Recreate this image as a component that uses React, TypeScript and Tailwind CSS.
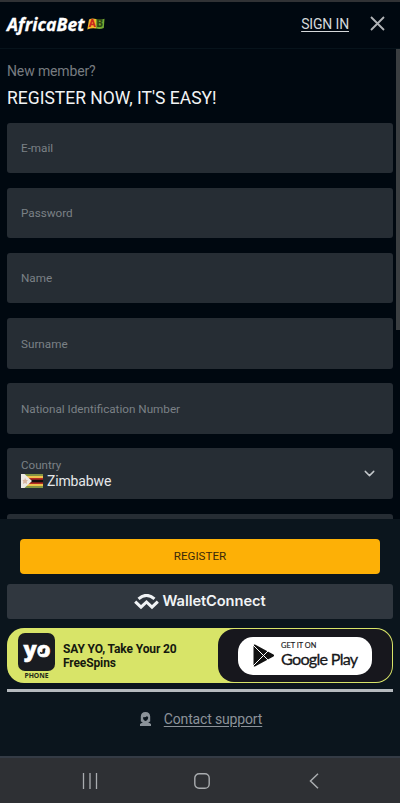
import { FiChevronDown } from 'react-icons/fi';

const fields = ['E-mail', 'Password', 'Name', 'Surname', 'National Identification Number'];

function Header() {
  return (
    <header className="h-[47px] shrink-0 flex items-center justify-between pl-[7px] pr-[15px] pb-[3px] border-b border-[#07131b]">
      <div className="flex items-center gap-[3px]">
        <span className="w-[77px] whitespace-nowrap font-['Open_Sans','Noto_Sans',sans-serif] font-bold italic text-[17.6px] leading-[22px] tracking-[0.05px] text-white [-webkit-text-stroke:0.3px_white]">
          AfricaBet
        </span>
        <svg width="18" height="16" viewBox="0 -2 18 16">
          <path d="M2 1.500Q5-.2 9 1V10.500Q5 9.500 .3 11.500Z" fill="#f3b92b" />
          <path d="M9 1Q13 2.500 17.500 .8L16.800 10Q13 11.500 9 10.500Z" fill="#75a832" />
          <text x="1.8" y="9.200" textLength="7.200" lengthAdjust="spacingAndGlyphs" fontFamily="Roboto, sans-serif" fontWeight="900" fontSize="10" fill="#c9271d">A</text>
          <text x="9.400" y="9.200" textLength="6.500" lengthAdjust="spacingAndGlyphs" fontFamily="Roboto, sans-serif" fontWeight="900" fontSize="10" fill="#304815">B</text>
        </svg>
      </div>
      <div className="flex items-center gap-[21px]">
        <a className="mt-px text-[14px] leading-5 tracking-[-0.15px] text-[#d5d8da] underline underline-offset-2">SIGN IN</a>
        <svg width="15" height="15" viewBox="0 0 15 15" fill="none" stroke="#b1b4b7" strokeWidth="1.8">
          <path d="M1 1l13 13M14 1L1 14" />
        </svg>
      </div>
    </header>
  );
}

function Flag() {
  return (
    <svg width="22" height="14" viewBox="0 0 22 14">
      <path d="M0 0h22v14H0z" fill="#829443" />
      <path d="M0 2h22v10H0z" fill="#efc14c" />
      <path d="M0 4h22v6H0z" fill="#b52b24" />
      <path d="M0 5.7h22v2.7H0z" fill="#160c0d" />
      <path d="M0 0h3.5L11 7l-7.5 7H0z" fill="#eeeae5" />
      <path d="M4 3.7l1 2 2 .5-1.3 1.4.3 2.3-2-1-2 1 .3-2.3L1.5 6l2-.3z" fill="#d9b5a0" />
    </svg>
  );
}

function RegisterForm() {
  return (
    <main className="relative h-[470px] shrink-0 overflow-hidden px-[7px] pt-[13px]">
      <p className="text-[14px] leading-[18px] tracking-[-0.13px] text-[#777c80]">New member?</p>
      <h1 className="mt-[6px] text-[17.5px] leading-6 text-[#f2f4f5]">REGISTER NOW, IT'S EASY!</h1>
      <div className="mt-[12.5px] flex flex-col gap-[14.7px]">
        {fields.map((label) => (
          <div key={label} className="h-[50.5px] flex items-center rounded-[3px] bg-[#262d34] px-[14px] pt-[2px] text-[11.7px] text-[#7b8186]">
            {label}
          </div>
        ))}
        <div className="h-[50.5px] flex items-center justify-between rounded-[3px] bg-[#262d34] pl-[14px] pr-[15px]">
          <div className="-mt-px">
            <div className="text-[11.6px] leading-[16px] text-[#7b8186]">Country</div>
            <div className="flex items-center gap-[4px] text-[14px] leading-[17px] tracking-[-0.15px] text-[#e5e7e9]">
              <Flag />
              Zimbabwe
            </div>
          </div>
          <FiChevronDown className="w-[17px] h-[17px] text-[#c3c7ca]" />
        </div>
        <div className="h-[50.5px] rounded-[3px] bg-[#262d34]" />
      </div>
      {/* Scrollbar thumb */}
      <div className="absolute right-0 top-0 w-[4px] h-[281px] bg-[#3a3e41]" />
    </main>
  );
}

function YoBanner() {
  return (
    <div className="mt-[9px] h-[55px] flex rounded-[17px] bg-[#d8e468] overflow-hidden">
      <div className="w-[61px] shrink-0 pl-[11px] pt-[5px] flex flex-col items-start">
        <div className="w-[37px] h-[38px] rounded-[7px] bg-[#191c21] flex items-center justify-center">
          <svg width="30" height="34" viewBox="0 0 30 34">
            <text x="1.5" y="22" fontFamily="Open Sans, sans-serif" fontWeight="800" fontSize="21" fill="#fff" stroke="#fff" strokeWidth=".6" textLength="27" lengthAdjust="spacingAndGlyphs">yo</text>
            <path d="M18 17.500q2.500 1.500 3.500-.5l1.500-3.500" stroke="#191c21" strokeWidth="1.5" fill="none" />
          </svg>
        </div>
        <span className="w-[37px] text-center font-['Open_Sans',sans-serif] font-bold text-[6.8px] leading-[10px] text-[#252a1a]">PHONE</span>
      </div>
      <p className="-ml-[5px] pt-[14px] whitespace-nowrap text-[12px] leading-[14px] tracking-[-0.12px] font-bold text-[#15190f]">
        SAY YO, Take Your 20
        <br />
        FreeSpins
      </p>
      <div className="my-px mr-px ml-auto w-[174px] rounded-[16px] bg-[#17171d] flex items-center pl-[20px]">
        <div className="w-[134px] h-[38px] rounded-[15px] bg-white flex items-center pl-[15px] gap-[7px]">
          <svg width="21" height="23" viewBox="0 0 21 23">
            <path d="M1.5 1.5L20 11.5l-18.5 10z" fill="#111" stroke="#111" strokeWidth="2" strokeLinejoin="round" />
            <path d="M0 1l15 15M0 22L15 7" stroke="#fff" strokeWidth="1" />
          </svg>
          <div className="whitespace-nowrap font-[Lato,sans-serif] text-[#17171a] -mt-[3px]">
            <div className="text-[7.4px] leading-[8px] [-webkit-text-stroke:0.15px_#17171a]">GET IT ON</div>
            <div className="text-[16.2px] leading-[17px] tracking-[-0.75px] [-webkit-text-stroke:0.3px_#17171a]">Google Play</div>
          </div>
        </div>
      </div>
    </div>
  );
}

function Footer() {
  return (
    <footer className="h-[237px] shrink-0 bg-[#0b151d] px-[7px] pt-[20px]">
      <button className="mx-[13px] w-[360px] h-[35px] block rounded-[4px] bg-[#fdb006] text-[11.6px] text-[#3a2909]">REGISTER</button>
      <div className="mt-[10px] h-[35px] rounded-[3px] bg-[#30373f] flex items-center justify-center gap-[3px]">
        <svg width="25" height="16" viewBox="0 0 25 16" fill="none" stroke="#f1f3f5" strokeWidth="3">
          <path d="M4.500 4.800Q12.500-2 20.500 4.800" />
          <path d="M1.200 7.600l5.800 5.600 5.500-5.200 5.500 5.200 5.800-5.600" />
        </svg>
        <span className="font-[Inter,sans-serif] font-semibold text-[14.7px] tracking-[-0.1px] text-[#f1f3f5]">WalletConnect</span>
      </div>
      <YoBanner />
      <div className="mt-[6px] h-[3px] bg-[#b5babe]" />
      <div className="mt-[17px] flex items-center justify-center gap-[13px] pl-[2px] text-[#8b9299]">
        <svg width="11" height="14" viewBox="0 0 11 14" fill="currentColor">
          <path d="M5.5 0C2.500 0 .8 2 .8 4.500V9.500l2 .8L0 12V14h11v-2l-2.800-1.700 2-.8V4.500C10.200 2 8.500 0 5.500 0z" />
          <path d="M3 5.300Q6 5.600 7 4q.5 1 1.200 1.300Q8 8.500 5.500 9 3 8.500 3 5.300z" fill="#0b151d" />
        </svg>
        <a className="text-[14px] leading-5 tracking-[-0.15px] underline underline-offset-2">Contact support</a>
      </div>
    </footer>
  );
}

function NavigationBar() {
  return (
    <nav className="h-[47px] shrink-0 bg-[#2e3034] border-t-2 border-[#343b45] flex items-center justify-between pl-[82px] pr-[81px] text-[#a9acaf]">
      <svg width="16" height="16" viewBox="0 0 16 16" stroke="currentColor" strokeWidth="1.3">
        <path d="M1.500 0v16M8 0v16M14.500 0v16" />
      </svg>
      <svg width="16" height="16" viewBox="0 0 16 16" fill="none" stroke="currentColor" strokeWidth="1.400" className="-ml-[3px]">
        <rect x=".8" y=".8" width="14.400" height="14.400" rx="4.300" />
      </svg>
      <svg width="10" height="16" viewBox="0 0 10 16" fill="none" stroke="currentColor" strokeWidth="1.500">
        <path d="M9 .8L1.500 8 9 15.200" />
      </svg>
    </nav>
  );
}

export default function App() {
  return (
    <div className="w-[400px] h-[803px] flex flex-col overflow-hidden bg-[#000810] border-t-2 border-[#303235] font-[Roboto,sans-serif]">
      <Header />
      <RegisterForm />
      <Footer />
      <NavigationBar />
    </div>
  );
}
